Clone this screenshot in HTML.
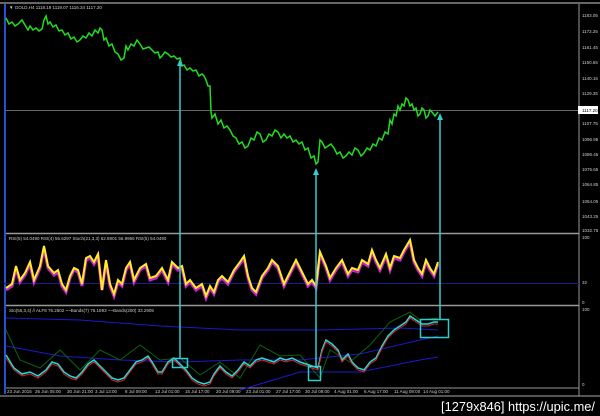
<!DOCTYPE html><html><head><style>
html,body{margin:0;padding:0;background:#000;width:600px;height:416px;overflow:hidden}
svg{display:block}
text{font-family:"Liberation Sans",sans-serif}
</style></head><body>
<svg width="600" height="416" viewBox="0 0 600 416">
<rect width="600" height="416" fill="#000"/>
<rect x="4" y="4" width="2" height="390" fill="#2a4fd0"/>
<line x1="0" y1="3" x2="600" y2="3" stroke="#888" stroke-width="1.5"/>
<line x1="6" y1="233.5" x2="579" y2="233.5" stroke="#999" stroke-width="1.5"/>
<line x1="6" y1="305.5" x2="579" y2="305.5" stroke="#999" stroke-width="1.5"/>
<line x1="6" y1="388" x2="579" y2="388" stroke="#999"/>
<line x1="0" y1="396" x2="600" y2="396" stroke="#aaa"/>
<line x1="579" y1="4" x2="579" y2="396" stroke="#999"/>
<line x1="6" y1="110.5" x2="579" y2="110.5" stroke="#666"/>
<rect x="578" y="106" width="20" height="8" fill="#fff"/>
<g font-size="4.5" fill="#ccc">
<text x="9" y="9">▼ GOLD,H4  1118.19 1119.07 1116.34 1117.20</text>
<text x="582" y="17">1183.05</text><text x="582" y="33">1172.25</text><text x="582" y="49">1161.45</text>
<text x="582" y="64">1150.65</text><text x="582" y="80">1140.15</text><text x="582" y="95">1129.35</text>
<text x="582" y="112" fill="#000">1117.20</text><text x="582" y="125">1107.75</text><text x="582" y="141">1096.95</text>
<text x="582" y="156">1086.45</text><text x="582" y="171">1075.65</text><text x="582" y="186">1064.85</text>
<text x="582" y="203">1054.05</text><text x="582" y="218">1043.25</text><text x="582" y="232">1032.75</text>
<text x="582" y="239">100</text><text x="582" y="284">32</text><text x="582" y="304">0</text>
<text x="582" y="311">100</text><text x="582" y="386">0</text>
<text x="9" y="240">RSI(5) 54.0490  RSI(4) 55.6297  Stoch(21,3,3) 62.6901 56.9955  RSI(5) 54.0490</text>
<text x="9" y="312">Sto(55,3,4) // ALF8 76.2602  ~~Bands(7) 76.1893  ~~Bands(200) 33.2905</text>
<text x="7" y="393">23 Jun 2015</text><text x="35" y="393">26 Jun 05:00</text><text x="67" y="393">30 Jun 21:00</text>
<text x="95" y="393">3 Jul 13:00</text><text x="125" y="393">8 Jul 09:00</text><text x="155" y="393">13 Jul 01:00</text>
<text x="185" y="393">15 Jul 17:00</text><text x="216" y="393">20 Jul 09:00</text><text x="246" y="393">23 Jul 01:00</text>
<text x="276" y="393">27 Jul 17:00</text><text x="305" y="393">30 Jul 09:00</text><text x="334" y="393">4 Aug 01:00</text>
<text x="364" y="393">6 Aug 17:00</text><text x="394" y="393">11 Aug 09:00</text><text x="423" y="393">14 Aug 01:00</text>
</g>
<polyline fill="none" stroke="#22dd22" stroke-width="1.5" points="6,18 9,24 12,22 15,26 18,24 22,20 25,25 28,30 30,26 33,30 36,28 39,31 42,29 44,20 46,16 48,24 50,22 53,27 56,25 59,31 62,30 65,35 68,33 71,39 74,37 77,42 80,40 83,36 86,38 89,33 92,36 95,30 98,33 100,28 102,30 104,40 106,38 109,46 112,44 115,52 118,54 121,60 124,58 126,46 128,50 131,44 134,46 137,40 140,44 143,49 146,48 149,47 152,50 155,53 158,52 160,58 162,56 165,52 168,54 171,57 174,56 177,59 180,58 182,66 184,65 187,70 190,68 193,71 196,70 199,76 202,74 204,76 206,80 208,86 210,86 211,112 212,118 215,114 218,124 221,120 224,128 227,126 230,130 233,136 236,138 239,144 242,142 245,148 248,146 251,138 254,140 257,132 260,134 263,142 266,140 269,134 272,136 275,130 278,132 281,138 284,134 287,138 290,136 293,142 296,140 299,144 302,142 305,150 308,148 311,158 314,156 316,164 318,162 320,140 322,142 325,148 328,146 331,144 334,148 337,154 340,152 343,158 346,156 349,152 352,155 355,148 358,150 361,156 364,153 367,148 370,150 373,144 376,146 379,138 382,140 385,132 388,134 390,120 392,124 394,114 396,116 398,106 400,110 402,104 404,106 406,98 408,100 410,106 412,104 414,110 416,108 418,116 420,114 422,108 424,110 426,118 428,116 430,110 432,112 435,116 438,112"/>
<line x1="4" y1="283.5" x2="579" y2="283.5" stroke="#1a1a8a"/>
<polyline fill="none" stroke="#1a1acc" points="6,346 60,356 120,360 180,362 240,360 300,360 360,354 420,340 438,336"/>
<polyline fill="none" stroke="#1a1acc" points="6,318 80,320 160,326 240,330 320,330 400,328 438,330"/>
<polyline fill="none" stroke="#1a1acc" points="240,390 300,372 360,372 420,360 438,357"/>
<polyline fill="none" stroke="#cc22cc" stroke-width="3" points="6,290 12,286 16,268 20,282 25,275 30,264 34,282 40,268 44,248 48,268 54,275 58,272 62,286 66,292 70,278 74,270 78,272 82,286 86,260 90,258 94,264 98,256 102,290 106,262 110,286 114,296 118,282 122,286 126,270 130,264 134,282 140,270 146,266 150,280 156,278 162,270 168,282 172,264 178,270 182,268 186,286 190,282 196,290 202,286 206,298 210,288 214,294 218,282 222,278 228,284 234,272 240,264 244,258 248,278 252,290 256,294 262,278 268,270 272,262 278,268 284,286 288,278 292,270 296,262 300,270 304,278 308,286 312,282 316,288 320,254 326,268 330,280 336,270 342,262 348,276 352,270 358,272 362,262 368,266 372,252 376,262 380,270 386,256 390,270 394,258 400,260 404,252 410,242 414,262 418,270 422,276 426,262 430,270 434,276 438,264"/>
<polyline fill="none" stroke="#ffee22" stroke-width="2" points="6,288 12,284 16,266 20,280 25,273 30,262 34,280 40,266 44,246 48,266 54,273 58,270 62,284 66,290 70,276 74,268 78,270 82,284 86,258 90,256 94,262 98,254 102,290 106,260 110,284 114,294 118,280 122,284 126,268 130,262 134,280 140,268 146,264 150,278 156,276 162,268 168,280 172,262 178,268 182,266 186,284 190,280 196,288 202,284 206,296 210,286 214,292 218,280 222,276 228,282 234,270 240,262 244,256 248,276 252,288 256,292 262,276 268,268 272,260 278,266 284,284 288,276 292,268 296,260 300,268 304,276 308,284 312,280 316,286 320,252 326,266 330,278 336,268 342,260 348,274 352,268 358,270 362,260 368,264 372,250 376,260 380,268 386,254 390,268 394,256 400,258 404,250 410,240 414,260 418,268 422,274 426,260 430,268 434,274 438,262"/>
<polyline fill="none" stroke="#0f5f0f" points="6,330 20,360 40,368 60,350 80,370 100,350 120,360 140,345 160,360 180,358 200,375 220,362 240,378 260,345 280,356 300,355 320,378 330,350 350,362 370,345 390,322 410,312 420,320 438,318"/>
<polyline fill="none" stroke="#22dddd" stroke-width="1.5" points="6,355 14,368 22,374 30,372 38,376 46,370 52,362 58,364 64,372 70,376 76,378 82,372 88,364 94,360 100,366 106,372 112,378 118,380 124,378 130,370 136,362 142,360 148,356 152,362 158,372 162,372 168,362 174,358 180,364 186,370 192,378 198,382 204,384 210,382 214,374 220,366 226,372 232,376 238,370 244,362 250,366 256,360 262,358 268,360 274,362 280,358 286,360 292,358 300,362 306,364 312,366 318,368 322,350 326,340 332,344 338,350 342,360 348,354 352,362 358,368 364,370 370,362 376,358 382,346 388,336 394,330 400,326 406,322 410,316 416,320 422,324 428,324 434,322 438,322"/>
<polyline fill="none" stroke="#dd2222" stroke-width="1" points="6,358 14,370 22,376 30,374 38,378 46,372 52,364 58,366 64,374 70,378 76,380 82,374 88,366 94,362 100,368 106,374 112,380 118,382 124,380 130,372 136,364 142,362 148,358 152,364 158,374 162,374 168,364 174,360 180,366 186,372 192,380 198,384 204,386 210,384 214,376 220,368 226,374 232,378 238,372 244,364 250,368 256,362 262,360 268,362 274,364 280,360 286,362 292,360 300,364 306,366 312,368 318,370 322,352 326,342 332,346 338,352 342,362 348,356 352,364 358,370 364,372 370,364 376,360 382,348 388,338 394,332 400,328 406,324 410,318 416,322 422,326 428,326 434,324 438,324"/>
<g stroke="#33cccc" stroke-width="1.5" fill="none">
<line x1="180" y1="358" x2="180" y2="64"/><line x1="316" y1="367" x2="316" y2="173"/><line x1="440" y1="319" x2="440" y2="118"/>
<rect x="172.5" y="358.5" width="15" height="9"/><rect x="308.5" y="366.5" width="12" height="14"/><rect x="420.5" y="319.5" width="28" height="18"/>
</g>
<g fill="#33cccc"><path d="M180,59 L177,66 L183,66Z"/><path d="M316,168 L313,175 L319,175Z"/><path d="M440,113 L437,120 L443,120Z"/></g>
<text x="441" y="411" font-size="13" fill="#fff" textLength="154" lengthAdjust="spacingAndGlyphs">[1279x846] https://upic.me/</text>
</svg>
</body></html>
